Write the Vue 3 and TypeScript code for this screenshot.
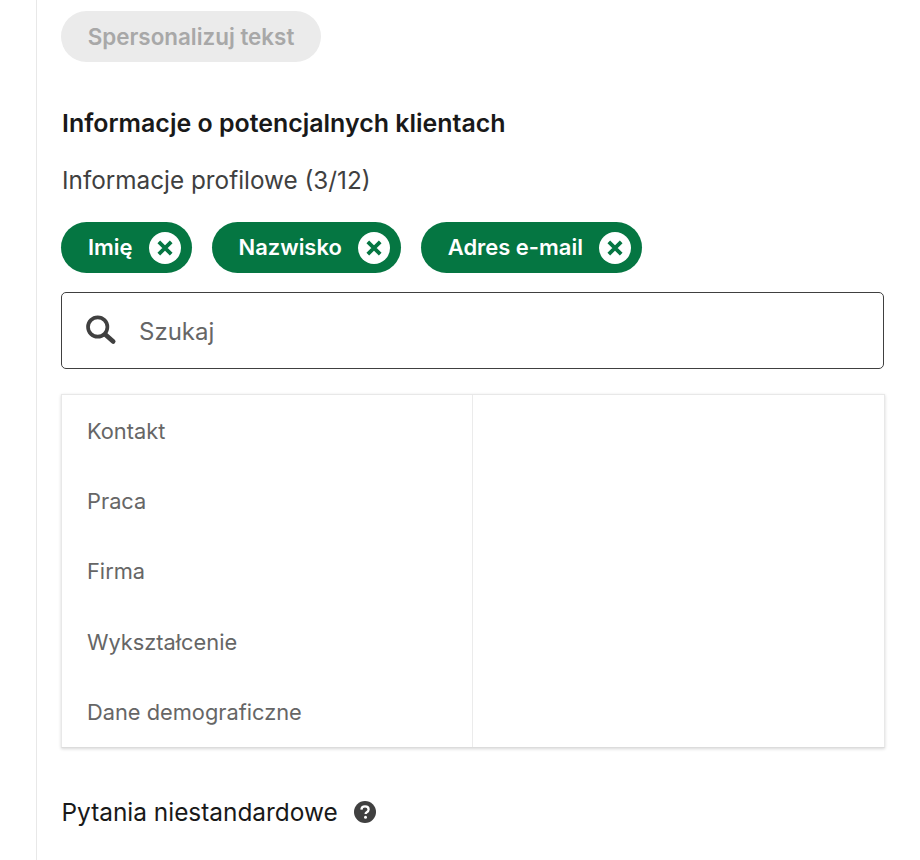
<script setup lang="ts">
const chips: string[] = ['Imię', 'Nazwisko', 'Adres e-mail']
const categories: string[] = ['Kontakt', 'Praca', 'Firma', 'Wykształcenie', 'Dane demograficzne']
</script>

<template>
  <div class="page">
    <main class="panel">
      <button class="personalize" type="button" disabled>Spersonalizuj tekst</button>
      <h2 class="heading">Informacje o potencjalnych klientach</h2>
      <p class="sub">Informacje profilowe (3/12)</p>
      <div class="chips">
        <div v-for="chip in chips" :key="chip" class="chip">
          <span class="chip-label">{{ chip }}</span>
          <svg class="chip-x" viewBox="0 0 32 32" aria-hidden="true">
            <circle cx="16" cy="16" r="16" fill="#fff" />
            <path d="M9.8 9.8 22.2 22.2M22.2 9.8 9.8 22.2" stroke="#057642" stroke-width="3.8" fill="none" />
          </svg>
        </div>
      </div>
      <div class="search">
        <svg class="search-icon" viewBox="0 0 32 32" aria-hidden="true">
          <circle cx="12.6" cy="12.4" r="10" fill="none" stroke="#404040" stroke-width="3.8" />
          <path d="M20.4 20.2 28.6 27.4" stroke="#404040" stroke-width="4.8" stroke-linecap="round" fill="none" />
        </svg>
        <span class="placeholder">Szukaj</span>
      </div>
      <div class="picker">
        <ul class="cats">
          <li v-for="cat in categories" :key="cat">{{ cat }}</li>
        </ul>
        <div class="detail"></div>
      </div>
      <div class="custom">
        <span>Pytania niestandardowe</span>
        <svg class="help" viewBox="0 0 22 22" aria-hidden="true">
          <circle cx="11" cy="11" r="11" fill="#404040" />
          <path d="M7.4 8.6C7.5 6.6 9 5.4 11 5.4c2.1 0 3.6 1.2 3.6 3 0 1.5-.9 2.2-1.9 2.9-.8.5-1.1.9-1.1 1.8" stroke="#fff" stroke-width="2.3" fill="none" />
          <circle cx="11.5" cy="16.2" r="1.5" fill="#fff" />
        </svg>
      </div>
    </main>
  </div>
</template>

<style>
html,
body {
  margin: 0;
  background: #fff;
}
</style>

<style scoped>
.page {
  width: 920px;
  height: 860px;
  overflow: hidden;
  box-sizing: border-box;
  padding-left: 36px;
  background: #fff;
  font-family: Inter, "Liberation Sans", sans-serif;
}
.panel {
  box-sizing: border-box;
  height: 860px;
  width: 849px;
  border-left: 1px solid #e8e8e8;
  padding: 11px 0 0 24px;
}
.personalize {
  display: block;
  width: 260px;
  height: 51px;
  border: 0;
  border-radius: 26px;
  background: #ebebeb;
  color: #a8a8a8;
  font: 600 22.4px/49px Inter, sans-serif;
  padding: 0;
}
.heading {
  margin: 46px 0 0 1px;
  font-size: 24.95px;
  line-height: 30px;
  font-weight: 600;
  color: #191919;
}
.sub {
  margin: 27px 0 0 1px;
  font-size: 24.3px;
  line-height: 30px;
  color: #404040;
}
.chips {
  display: flex;
  gap: 20px;
  margin-top: 27px;
}
.chip {
  display: flex;
  align-items: center;
  gap: 16px;
  height: 51px;
  padding: 0 11px 0 27px;
  border-radius: 26px;
  background: #057642;
  color: #fff;
  font-size: 21.95px;
  font-weight: 600;
}
.chip-label {
  margin-top: -2px;
}
.chip-x {
  width: 32px;
  height: 32px;
  flex: none;
}
.search {
  display: flex;
  align-items: center;
  box-sizing: border-box;
  height: 77px;
  margin: 19px 1px 0 0;
  padding-left: 23px;
  border: 1px solid #404040;
  border-radius: 5px;
}
.search-icon {
  width: 32px;
  height: 31px;
  flex: none;
}
.placeholder {
  margin: 2px 0 0 22px;
  font-size: 24px;
  color: #666;
}
.picker {
  display: flex;
  height: 354px;
  margin: 25px 0 0 -0.5px;
  box-sizing: border-box;
  border: 1px solid #e8e8e8;
  border-bottom-color: #dcdcdc;
  box-shadow: 0 1px 3px rgba(0, 0, 0, 0.16);
}
.cats {
  list-style: none;
  width: 411px;
  margin: 0;
  padding: 0;
  box-sizing: border-box;
  border-right: 1px solid #ebebeb;
}
.cats li {
  height: 70.2px;
  line-height: 73px;
  padding-left: 25.5px;
  font-size: 21.8px;
  color: #666;
}
.detail {
  flex: 1;
}
.custom {
  display: flex;
  align-items: center;
  gap: 16px;
  margin: 47px 0 0 0.5px;
  font-size: 24.4px;
  line-height: 34px;
  color: #191919;
}
.help {
  width: 22px;
  height: 22px;
  flex: none;
}
</style>
